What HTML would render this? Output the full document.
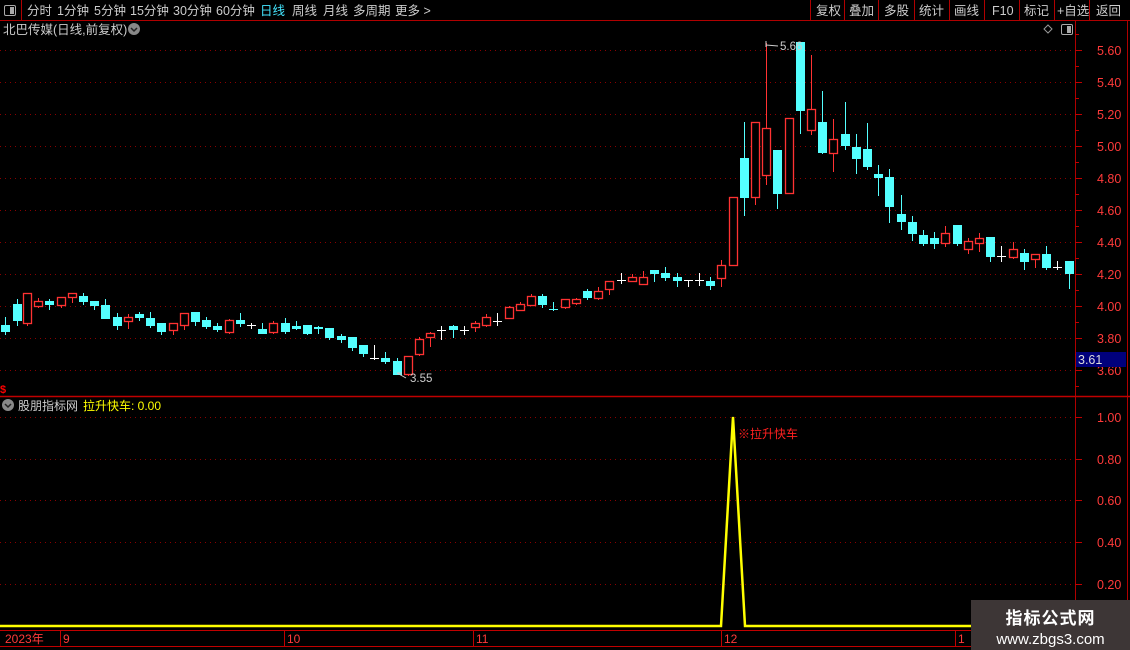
<!DOCTYPE html>
<html><head><meta charset="utf-8"><style>
html,body{margin:0;padding:0;background:#000;width:1130px;height:650px;overflow:hidden;font-family:"Liberation Sans","Noto Sans CJK SC",sans-serif;}
svg{position:absolute;left:0;top:0}
text{font-family:"Liberation Sans","Noto Sans CJK SC",sans-serif}
.wm{position:absolute;left:971px;top:600px;width:159px;height:50px;background:#3d3636;color:#fff;text-align:center}
</style></head><body>
<svg id="s" width="1130" height="650" xmlns="http://www.w3.org/2000/svg">
<rect width="1130" height="650" fill="#000"/>
<line x1="0" y1="20.5" x2="1130" y2="20.5" stroke="#b00000"/>
<line x1="21.5" y1="0" x2="21.5" y2="20" stroke="#b00000"/>
<rect x="4.5" y="5.5" width="11" height="10" rx="1.5" fill="none" stroke="#aaa"/>
<rect x="10" y="7" width="4" height="7" fill="#aaa"/>
<g font-size="12.5" fill="#ccc">
<text x="27" y="15">分时</text><text x="57" y="15">1分钟</text><text x="94" y="15">5分钟</text><text x="130" y="15">15分钟</text><text x="173" y="15">30分钟</text><text x="216" y="15">60分钟</text>
<text x="260" y="15" fill="#44e6ff">日线</text><text x="292" y="15">周线</text><text x="323" y="15">月线</text><text x="353" y="15">多周期</text><text x="395" y="15">更多 &gt;</text>
<text x="816" y="15">复权</text><text x="849" y="15">叠加</text><text x="884" y="15">多股</text><text x="919" y="15">统计</text><text x="954" y="15">画线</text><text x="992" y="15">F10</text><text x="1024" y="15">标记</text><text x="1057" y="15">+自选</text><text x="1096" y="15">返回</text>
</g>
<g stroke="#b00000"><line x1="810.5" y1="0" x2="810.5" y2="20"/><line x1="844.5" y1="0" x2="844.5" y2="20"/><line x1="878.5" y1="0" x2="878.5" y2="20"/><line x1="914.5" y1="0" x2="914.5" y2="20"/><line x1="949.5" y1="0" x2="949.5" y2="20"/><line x1="984.5" y1="0" x2="984.5" y2="20"/><line x1="1019.5" y1="0" x2="1019.5" y2="20"/><line x1="1054.5" y1="0" x2="1054.5" y2="20"/><line x1="1089.5" y1="0" x2="1089.5" y2="20"/></g>
<text x="3" y="34" font-size="12.5" fill="#ccc">北巴传媒(日线,前复权)</text>
<circle cx="134" cy="29" r="6" fill="#888"/><path d="M131 28 L134 31 L137 28" stroke="#222" stroke-width="1.5" fill="none"/>
<path d="M1048 25 L1052 29 L1048 33 L1044 29 Z" fill="none" stroke="#999"/>
<rect x="1061.5" y="24.5" width="11" height="10" rx="1.5" fill="none" stroke="#aaa"/><rect x="1067" y="26" width="4" height="7" fill="#aaa"/>
<line x1="1075.5" y1="21" x2="1075.5" y2="630" stroke="#b00000"/>
<line x1="1127.5" y1="21" x2="1127.5" y2="630" stroke="#b00000"/>
<line x1="0" y1="396.5" x2="1130" y2="396.5" stroke="#c00000" stroke-width="1.5"/>
<line x1="0" y1="630.5" x2="1130" y2="630.5" stroke="#c00000"/>
<line x1="0" y1="646.5" x2="1130" y2="646.5" stroke="#c00000"/>
<g id="grid"></g>
<g id="cand"></g>
<g font-size="11.5" fill="#ccc"><text x="410" y="382">3.55</text><text x="780" y="50">5.66</text></g>
<path d="M397 373 L406 378 M397 373 L402 373 M766 45 L778 46 M766 41 L766 47" stroke="#ccc" fill="none"/>
<rect x="1076" y="352" width="50" height="15" fill="#00007c"/>
<text x="1078" y="364" font-size="12.5" fill="#ddd">3.61</text>
<text x="0" y="393" font-size="11" fill="#f00" font-weight="bold">$</text>
<circle cx="8" cy="405" r="6" fill="#888"/><path d="M5 404 L8 407 L11 404" stroke="#222" stroke-width="1.5" fill="none"/>
<text x="18" y="410" font-size="12" fill="#ccc">股朋指标网</text>
<text x="83" y="410" font-size="12" fill="#ffff00">拉升快车: 0.00</text>
<polyline points="0,626 721,626 733,417 745,626 1075,626" fill="none" stroke="#ffff00" stroke-width="2.5"/>
<text x="738" y="438" font-size="12" fill="#ff2020">※拉升快车</text>
<g font-size="12" fill="#ff3a3a"><text x="5" y="643">2023年</text><text x="63" y="643">9</text><text x="287" y="643">10</text><text x="476" y="643">11</text><text x="724" y="643">12</text><text x="958" y="643">1</text></g>
<g stroke="#c00000"><line x1="60.5" y1="631" x2="60.5" y2="646"/><line x1="284.5" y1="631" x2="284.5" y2="646"/><line x1="473.5" y1="631" x2="473.5" y2="646"/><line x1="721.5" y1="631" x2="721.5" y2="646"/><line x1="955.5" y1="631" x2="955.5" y2="646"/></g>
</svg>
<div class="wm"><div style="font-size:17px;font-weight:bold;margin-top:4px;letter-spacing:1px">指标公式网</div><div style="font-size:15px;margin-top:2px">www.zbgs3.com</div></div>
<script>
var NS="http://www.w3.org/2000/svg";
function el(p,t,a){var e=document.createElementNS(NS,t);for(var k in a)e.setAttribute(k,a[k]);p.appendChild(e);return e;}
var g=document.getElementById('grid');
var pr=[["5.60",50],["5.40",82],["5.20",114],["5.00",146],["4.80",178],["4.60",210],["4.40",242],["4.20",274],["4.00",306],["3.80",338],["3.60",370]];
pr.forEach(function(p){el(g,'line',{x1:0,y1:p[1]+.5,x2:1075,y2:p[1]+.5,stroke:'#8a0000','stroke-dasharray':'1 4'});
el(g,'line',{x1:1075,y1:p[1]+.5,x2:1082,y2:p[1]+.5,stroke:'#c00000'});
var t=el(g,'text',{x:1097,y:p[1]+5,'font-size':12.5,fill:'#ff3a3a'});t.textContent=p[0];});
for(var y=34;y<395;y+=16){el(g,'line',{x1:1075,y1:y+.5,x2:1079,y2:y+.5,stroke:'#c00000'});}
var ip=[["1.00",417],["0.80",459],["0.60",500],["0.40",542],["0.20",584]];
ip.forEach(function(p){el(g,'line',{x1:0,y1:p[1]+.5,x2:1075,y2:p[1]+.5,stroke:'#8a0000','stroke-dasharray':'1 4'});
el(g,'line',{x1:1075,y1:p[1]+.5,x2:1082,y2:p[1]+.5,stroke:'#c00000'});
var t=el(g,'text',{x:1097,y:p[1]+5,'font-size':12.5,fill:'#ff3a3a'});t.textContent=p[0];});
var D=[[5,'c',325,331,317,334],[17,'c',304,320,299,325],[27,'r',293,323,293,325],[38,'r',301,306,298,307],[49,'c',301,304,299,309],[61,'r',297,305,297,307],[72,'r',293,297,293,302],[83,'c',296,301,293,304],[94,'c',301,305,301,309],[105,'c',305,318,299,318],[117,'c',317,325,313,329],[128,'r',317,321,314,328],[139,'c',314,317,312,320],[150,'c',318,325,312,327],[161,'c',323,331,323,334],[173,'r',323,330,323,334],[184,'r',313,325,313,329],[195,'c',312,321,312,325],[206,'c',320,326,317,328],[217,'c',326,329,323,331],[229,'r',320,332,319,333],[240,'c',320,323,313,326],[251,'w',325,325,323,328],[262,'c',329,333,323,333],[273,'r',323,332,321,333],[285,'c',323,331,318,333],[296,'c',326,328,321,329],[307,'c',325,333,325,334],[318,'c',327,328,326,333],[329,'c',328,337,328,339],[341,'c',336,339,334,342],[352,'c',337,347,337,350],[363,'c',345,353,345,356],[374,'w',358,358,345,359],[385,'c',358,361,352,363],[397,'c',361,374,358,374],[408,'r',356,374,356,375],[419,'r',339,354,337,355],[430,'r',333,337,332,346],[441,'w',330,330,326,339],[453,'c',326,329,325,337],[464,'w',330,330,326,334],[475,'r',323,327,321,331],[486,'r',317,325,314,326],[497,'w',321,321,313,325],[509,'r',307,318,306,318],[520,'r',304,310,302,310],[531,'r',296,305,294,305],[542,'c',296,304,294,307],[553,'c',309,309,302,310],[565,'r',299,307,299,308],[576,'r',299,303,298,304],[587,'c',291,297,289,299],[598,'r',291,298,287,299],[609,'r',281,289,281,294],[621,'w',280,280,273,283],[632,'r',277,281,274,281],[643,'r',277,284,271,284],[654,'c',270,273,270,281],[665,'c',273,277,267,280],[677,'c',277,280,273,286],[688,'w',280,280,280,286],[699,'w',280,280,273,285],[710,'c',281,285,277,289],[721,'r',265,278,260,286],[733,'r',197,265,197,265],[744,'c',158,197,122,215],[755,'r',122,197,122,204],[766,'r',128,175,43,184],[777,'c',150,193,150,208],[789,'r',118,193,118,193],[800,'c',42,110,42,133],[811,'r',109,130,55,134],[822,'c',122,152,91,153],[833,'r',139,153,119,171],[845,'c',134,145,102,149],[856,'c',147,158,134,173],[867,'c',149,166,123,169],[878,'c',174,177,165,195],[889,'c',177,206,169,222],[901,'c',214,221,195,229],[912,'c',222,233,216,240],[923,'c',235,243,230,245],[934,'c',238,243,232,248],[945,'r',233,243,226,246],[957,'c',225,243,225,245],[968,'r',241,249,238,253],[979,'r',238,243,233,251],[990,'c',237,256,237,261],[1001,'w',256,256,246,261],[1013,'r',249,257,242,258],[1024,'c',253,261,249,269],[1035,'r',254,259,254,267],[1046,'c',254,267,246,269],[1057,'w',267,267,261,269],[1069,'c',261,273,261,288]];
var c=document.getElementById('cand');
var col={c:'#54ffff',r:'#ff3232',w:'#ffffff'};
D.forEach(function(d){var x=d[0],k=d[1],t=d[2],b=d[3],h=d[4],l=d[5],C=col[k];
el(c,'line',{x1:x+.5,y1:h,x2:x+.5,y2:l+1,stroke:C});
if(b-t<1){el(c,'line',{x1:x-4,y1:t+.5,x2:x+5,y2:t+.5,stroke:C});}
else if(k=='r'){el(c,'rect',{x:x-3.5,y:t+.5,width:8,height:b-t,fill:'#000',stroke:C,'stroke-width':1.3});}
else{el(c,'rect',{x:x-4,y:t,width:9,height:b-t+1,fill:C});}});
</script>
</body></html>
